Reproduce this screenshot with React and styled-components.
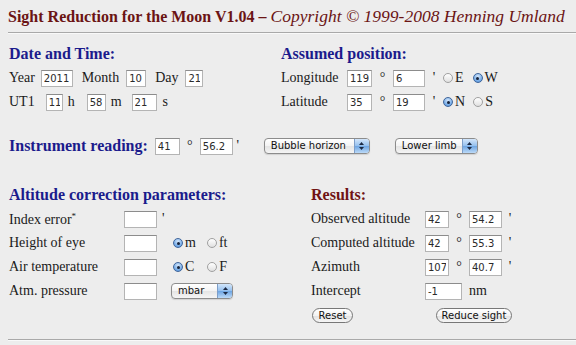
import styled, { createGlobalStyle } from 'styled-components';

const GlobalStyle = createGlobalStyle`
    html, body {
        margin: 0;
        padding: 0;
        background: #ededed;
    }
    body {
        font-family: "Liberation Serif", "Times New Roman", serif;
        font-size: 14px;
        color: #1a1a1a;
    }
`

export default function App() {
    return (
        <Page>
            <GlobalStyle />
            <Title>
                Sight Reduction for the Moon V1.04 – <em>Copyright © 1999-2008 Henning Umland</em>
            </Title>
            <Rule />

            <TopGrid>
                <Column>
                    <Heading>Date and Time:</Heading>
                    <Row>
                        <Label>Year</Label>
                        <Field $w={32} $ml={6} defaultValue="2011" />
                        <Label $ml={9}>Month</Label>
                        <Field $w={20} $ml={7} defaultValue="10" />
                        <Label $ml={9}>Day</Label>
                        <Field $w={18} $ml={7} defaultValue="21" />
                    </Row>
                    <Row>
                        <Label>UT1</Label>
                        <Field $w={17} $ml={11} defaultValue="11" />
                        <Label $ml={5}>h</Label>
                        <Field $w={19} $ml={12} defaultValue="58" />
                        <Label $ml={5}>m</Label>
                        <Field $w={25} $ml={10} defaultValue="21" />
                        <Label $ml={6}>s</Label>
                    </Row>
                </Column>
                <Column>
                    <Heading>Assumed position:</Heading>
                    <Row>
                        <Label $w={66}>Longitude</Label>
                        <Field $w={25} defaultValue="119" />
                        <Unit $w={21}>°</Unit>
                        <Field $w={32} defaultValue="6" />
                        <Unit $w={18}>'</Unit>
                        <Radio label="E" />
                        <Radio label="W" on ml={9} />
                    </Row>
                    <Row>
                        <Label $w={66}>Latitude</Label>
                        <Field $w={25} defaultValue="35" />
                        <Unit $w={21}>°</Unit>
                        <Field $w={32} defaultValue="19" />
                        <Unit $w={18}>'</Unit>
                        <Radio label="N" on />
                        <Radio label="S" ml={8} />
                    </Row>
                </Column>
            </TopGrid>

            <InstrumentRow>
                <Heading as="span">Instrument reading:</Heading>
                <Field $w={25} $ml={7} defaultValue="41" />
                <Unit $w={20}>°</Unit>
                <Field $w={33} defaultValue="56.2" />
                <Unit $w={10}>'</Unit>
                <Popup text="Bubble horizon" w={106} ml={21} />
                <Popup text="Lower limb" w={83} ml={25} />
            </InstrumentRow>

            <BottomGrid>
                <Column>
                    <Heading>Altitude correction parameters:</Heading>
                    <Row>
                        <Label $w={115}>Index error<sup>*</sup></Label>
                        <Field $w={33} />
                        <Label $ml={5}>'</Label>
                    </Row>
                    <Row>
                        <Label $w={115}>Height of eye</Label>
                        <Field $w={33} />
                        <Radio label="m" on ml={16} />
                        <Radio label="ft" ml={11} />
                    </Row>
                    <Row>
                        <Label $w={115}>Air temperature</Label>
                        <Field $w={33} />
                        <Radio label="C" on ml={16} />
                        <Radio label="F" ml={13} />
                    </Row>
                    <Row>
                        <Label $w={115}>Atm. pressure</Label>
                        <Field $w={33} />
                        <Popup text="mbar" w={62} ml={14} />
                    </Row>
                </Column>
                <Column>
                    <Heading $red>Results:</Heading>
                    <Row>
                        <Label $w={114}>Observed altitude</Label>
                        <Field $w={24} defaultValue="42" />
                        <Unit $w={20}>°</Unit>
                        <Field $w={33} defaultValue="54.2" />
                        <Unit $w={16}>'</Unit>
                    </Row>
                    <Row>
                        <Label $w={114}>Computed altitude</Label>
                        <Field $w={24} defaultValue="42" />
                        <Unit $w={20}>°</Unit>
                        <Field $w={33} defaultValue="55.3" />
                        <Unit $w={16}>'</Unit>
                    </Row>
                    <Row>
                        <Label $w={114}>Azimuth</Label>
                        <Field $w={24} defaultValue="107" />
                        <Unit $w={20}>°</Unit>
                        <Field $w={33} defaultValue="40.7" />
                        <Unit $w={16}>'</Unit>
                    </Row>
                    <Row>
                        <Label $w={114}>Intercept</Label>
                        <Field $w={37} defaultValue="-1" />
                        <Label $ml={7}>nm</Label>
                    </Row>
                    <Row>
                        <Pill $w={41} $ml={1}>Reset</Pill>
                        <Pill $w={76} $ml={83}>Reduce sight</Pill>
                    </Row>
                </Column>
            </BottomGrid>
            <Rule $top={12} />
        </Page>
    )
}

function Radio({ label, on, ml }) {
    return (
        <RadioItem $ml={ml}>
            <RadioDot $on={on} />
            {label}
        </RadioItem>
    )
}

function Popup({ text, w, ml }) {
    return (
        <PopupBox $w={w} $ml={ml}>
            <PopupText>{text}</PopupText>
            <PopupArrow>
                <svg width="5" height="8" viewBox="0 0 5 8">
                    <polygon points="2.5,0 0,3 5,3" fill="#1c2a44" />
                    <polygon points="0,5 5,5 2.5,8" fill="#1c2a44" />
                </svg>
            </PopupArrow>
        </PopupBox>
    )
}

const Page = styled.div`
    width: 576px;
    height: 345px;
    overflow: hidden;
    box-sizing: border-box;
    padding-top: 6px;
`
const Title = styled.h1`
    margin: 0 0 0 8px;
    height: 20px;
    line-height: 20px;
    font-size: 16px;
    font-weight: bold;
    color: #6b1414;
    white-space: nowrap;

    em {
        font-weight: normal;
        font-style: italic;
        font-size: 17.5px;
    }
`
const Rule = styled.div`
    margin: ${props => props.$top || 6}px 0 0 8px;
    border-top: 1px solid #a9a9a9;
    border-bottom: 1px solid #f9f9f9;
`
const TopGrid = styled.div`
    display: grid;
    grid-template-columns: 272px 1fr;
    margin-top: 8px;
    padding-left: 9px;
`
const BottomGrid = styled.div`
    display: grid;
    grid-template-columns: 302px 1fr;
    margin-top: 25px;
    padding-left: 9px;
`
const Column = styled.div`
    display: flex;
    flex-direction: column;
`
const Heading = styled.div`
    height: 24px;
    line-height: 24px;
    font-size: 16px;
    font-weight: bold;
    color: ${props => props.$red ? '#701313' : '#1b1b8c'};
    white-space: nowrap;
`
const Row = styled.div`
    display: flex;
    align-items: center;
    height: 24px;
    white-space: nowrap;
`
const InstrumentRow = styled(Row)`
    margin-top: 20px;
    padding-left: 9px;
`
const Label = styled.span`
    flex: none;
    width: ${props => props.$w ? props.$w + 'px' : 'auto'};
    margin-left: ${props => props.$ml || 0}px;

    sup {
        font-size: 9px;
        vertical-align: 5px;
    }
`
const Unit = styled.span`
    flex: none;
    width: ${props => props.$w}px;
    text-align: center;
`
const Field = styled.input`
    flex: none;
    box-sizing: border-box;
    width: ${props => props.$w}px;
    height: 17px;
    margin: 0 0 0 ${props => props.$ml || 0}px;
    padding: 0 2px;
    border: 1px solid #b4b4b4;
    border-top-color: #8c8c8c;
    background: #fff;
    font-family: "DejaVu Sans", sans-serif;
    font-size: 10px;
    color: #2a2a2a;
    outline: none;
`
const RadioItem = styled.span`
    display: inline-flex;
    align-items: center;
    gap: 2px;
    margin-left: ${props => props.$ml || 0}px;
`
const RadioDot = styled.span`
    display: inline-flex;
    align-items: center;
    justify-content: center;
    box-sizing: border-box;
    width: 10px;
    height: 10px;
    border-radius: 50%;
    border: 1px solid ${props => props.$on ? '#40659a' : '#a0a0a0'};
    background: ${props => props.$on
        ? 'radial-gradient(circle at 50% 30%, #d4e7fc, #74aae6 65%, #4f8bd3)'
        : 'linear-gradient(#ffffff, #e0e0e0)'};

    &::after {
        content: '';
        display: ${props => props.$on ? 'block' : 'none'};
        width: 3px;
        height: 3px;
        border-radius: 50%;
        background: #17223a;
    }
`
const PopupBox = styled.div`
    flex: none;
    display: inline-flex;
    align-items: stretch;
    box-sizing: border-box;
    width: ${props => props.$w}px;
    height: 16px;
    margin-left: ${props => props.$ml || 0}px;
    border: 1px solid #8c8c8c;
    border-radius: 4px;
    overflow: hidden;
    background: linear-gradient(#ffffff, #f3f3f3 50%, #e4e4e4 51%, #f5f5f5);
    box-shadow: 0 1px 1px rgba(0, 0, 0, 0.12);
    font-family: "DejaVu Sans", sans-serif;
    font-size: 10px;
    color: #111;
`
const PopupText = styled.span`
    flex: 1;
    padding-left: 6px;
    line-height: 14px;
    white-space: nowrap;
    overflow: hidden;
`
const PopupArrow = styled.span`
    flex: none;
    width: 14px;
    display: flex;
    align-items: center;
    justify-content: center;
    border-left: 1px solid #7d9ec9;
    background: linear-gradient(#d3e6fb, #93bfee 50%, #6ca4e2 51%, #bcdaf8);
`
const Pill = styled.button`
    flex: none;
    box-sizing: border-box;
    width: ${props => props.$w}px;
    height: 15px;
    margin-left: ${props => props.$ml || 0}px;
    padding: 0;
    border: 1px solid #777;
    border-radius: 8px;
    background: linear-gradient(#ffffff, #f3f3f3 50%, #e1e1e1 51%, #f6f6f6);
    font-family: "DejaVu Sans", sans-serif;
    font-size: 10px;
    line-height: 13px;
    color: #111;
`
